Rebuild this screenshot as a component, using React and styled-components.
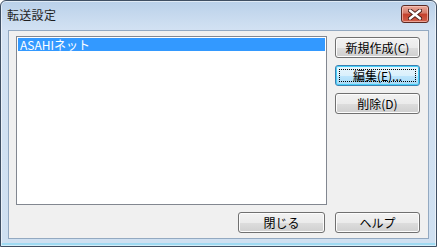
import React from "react"
import styled, { createGlobalStyle } from "styled-components"

const GlobalStyle = createGlobalStyle`
  html, body {
    margin: 0;
    padding: 0;
    background: #ffffff;
  }
  body {
    font-family: "Noto Sans CJK JP", "Liberation Sans", sans-serif;
    font-size: 12px;
  }
`

const Window = styled.div`
  box-sizing: border-box;
  width: 437px;
  height: 247px;
  display: flex;
  flex-direction: column;
  border: 1px solid #3f4f63;
  border-radius: 6px 6px 0 0;
  background: linear-gradient(to bottom, #b9d0e9 0px, #c6d9ee 14px, #d3e2f3 30px, #cfe0f1 100%);
  box-shadow: inset 0 0 0 1px rgba(255, 255, 255, 0.55), inset 0 -3px 0 #9fdaf2;
`

const TitleBar = styled.div`
  height: 29px;
  display: flex;
  align-items: flex-start;
  justify-content: space-between;
  padding: 0 7px 0 6px;
`

const Title = styled.span`
  margin-top: 6px;
  font-size: 12px;
  line-height: 16px;
  color: #1e1e1e;
  letter-spacing: 0.3px;
`

const CloseButton = styled.div`
  box-sizing: border-box;
  margin-top: 4px;
  width: 28px;
  height: 18px;
  display: flex;
  align-items: center;
  justify-content: center;
  border: 1px solid #5c2a24;
  border-radius: 3px;
  background: linear-gradient(to bottom, #e9a99b 0%, #d47a69 45%, #c4402c 50%, #d0604c 100%);
  box-shadow: inset 0 0 0 1px rgba(255, 210, 200, 0.6);
`

const Client = styled.div`
  flex: 1;
  display: flex;
  flex-direction: column;
  margin: 0 7px 7px 7px;
  padding: 5px 8px 0 7px;
  border: 1px solid #93a9c1;
  background: #f0f0f0;
`

const TopRow = styled.div`
  display: flex;
  gap: 8px;
`

const ListBox = styled.div`
  box-sizing: border-box;
  width: 313px;
  height: 169px;
  padding: 1px;
  border: 1px solid #828790;
  background: #ffffff;
`

const ListItem = styled.div`
  height: 13px;
  line-height: 13px;
  padding-left: 2px;
  color: ${(p) => (p.selected ? "#ffffff" : "#000000")};
  background: ${(p) => (p.selected ? "#3399ff" : "transparent")};
  white-space: nowrap;
`

const ButtonColumn = styled.div`
  display: flex;
  flex-direction: column;
  gap: 7px;
  margin-top: 1px;
`

const BottomRow = styled.div`
  display: flex;
  justify-content: flex-end;
  gap: 10px;
  margin-top: 7px;
`

const Button = styled.div`
  box-sizing: border-box;
  position: relative;
  width: ${(p) => p.width || 85}px;
  height: 21px;
  display: flex;
  align-items: center;
  justify-content: center;
  border: 1px solid ${(p) => (p.focused ? "#3c7fb1" : "#707070")};
  border-radius: 3px;
  color: #000000;
  font-size: 12px;
  background: ${(p) =>
    p.focused
      ? "linear-gradient(to bottom, #eaf6fd 0%, #d9f0fc 50%, #bee6fd 51%, #a7d9f5 100%)"
      : "linear-gradient(to bottom, #f2f2f2 0%, #ebebeb 50%, #dddddd 51%, #cfcfcf 100%)"};
  box-shadow: inset 0 0 0 1px ${(p) => (p.focused ? "#48d0f7" : "#fcfcfc")};
`

const FocusRing = styled.span`
  position: absolute;
  inset: 3px;
  border: 1px dotted #000000;
`

const Label = styled.span`
  position: relative;
`

const CloseGlyph = () => (
  <svg width="14" height="11" viewBox="0 0 14 11">
    <path
      d="M2 1.5 L12 9.5 M12 1.5 L2 9.5"
      stroke="#4a1e18"
      strokeWidth="4.2"
      strokeLinecap="round"
    />
    <path
      d="M2 1.5 L12 9.5 M12 1.5 L2 9.5"
      stroke="#ffffff"
      strokeWidth="2.4"
      strokeLinecap="round"
    />
  </svg>
)

const App = () => {
  const items = ["ASAHIネット"]

  return (
    <>
      <GlobalStyle />
      <Window>
        <TitleBar>
          <Title>転送設定</Title>
          <CloseButton>
            <CloseGlyph />
          </CloseButton>
        </TitleBar>
        <Client>
          <TopRow>
            <ListBox>
              {items.map((item, i) => (
                <ListItem key={item} selected={i === 0}>
                  {item}
                </ListItem>
              ))}
            </ListBox>
            <ButtonColumn>
              <Button>
                <Label>新規作成(C)</Label>
              </Button>
              <Button focused>
                <FocusRing />
                <Label>編集(E)...</Label>
              </Button>
              <Button>
                <Label>削除(D)</Label>
              </Button>
            </ButtonColumn>
          </TopRow>
          <BottomRow>
            <Button width={87}>
              <Label>閉じる</Label>
            </Button>
            <Button>
              <Label>ヘルプ</Label>
            </Button>
          </BottomRow>
        </Client>
      </Window>
    </>
  )
}

export default App
